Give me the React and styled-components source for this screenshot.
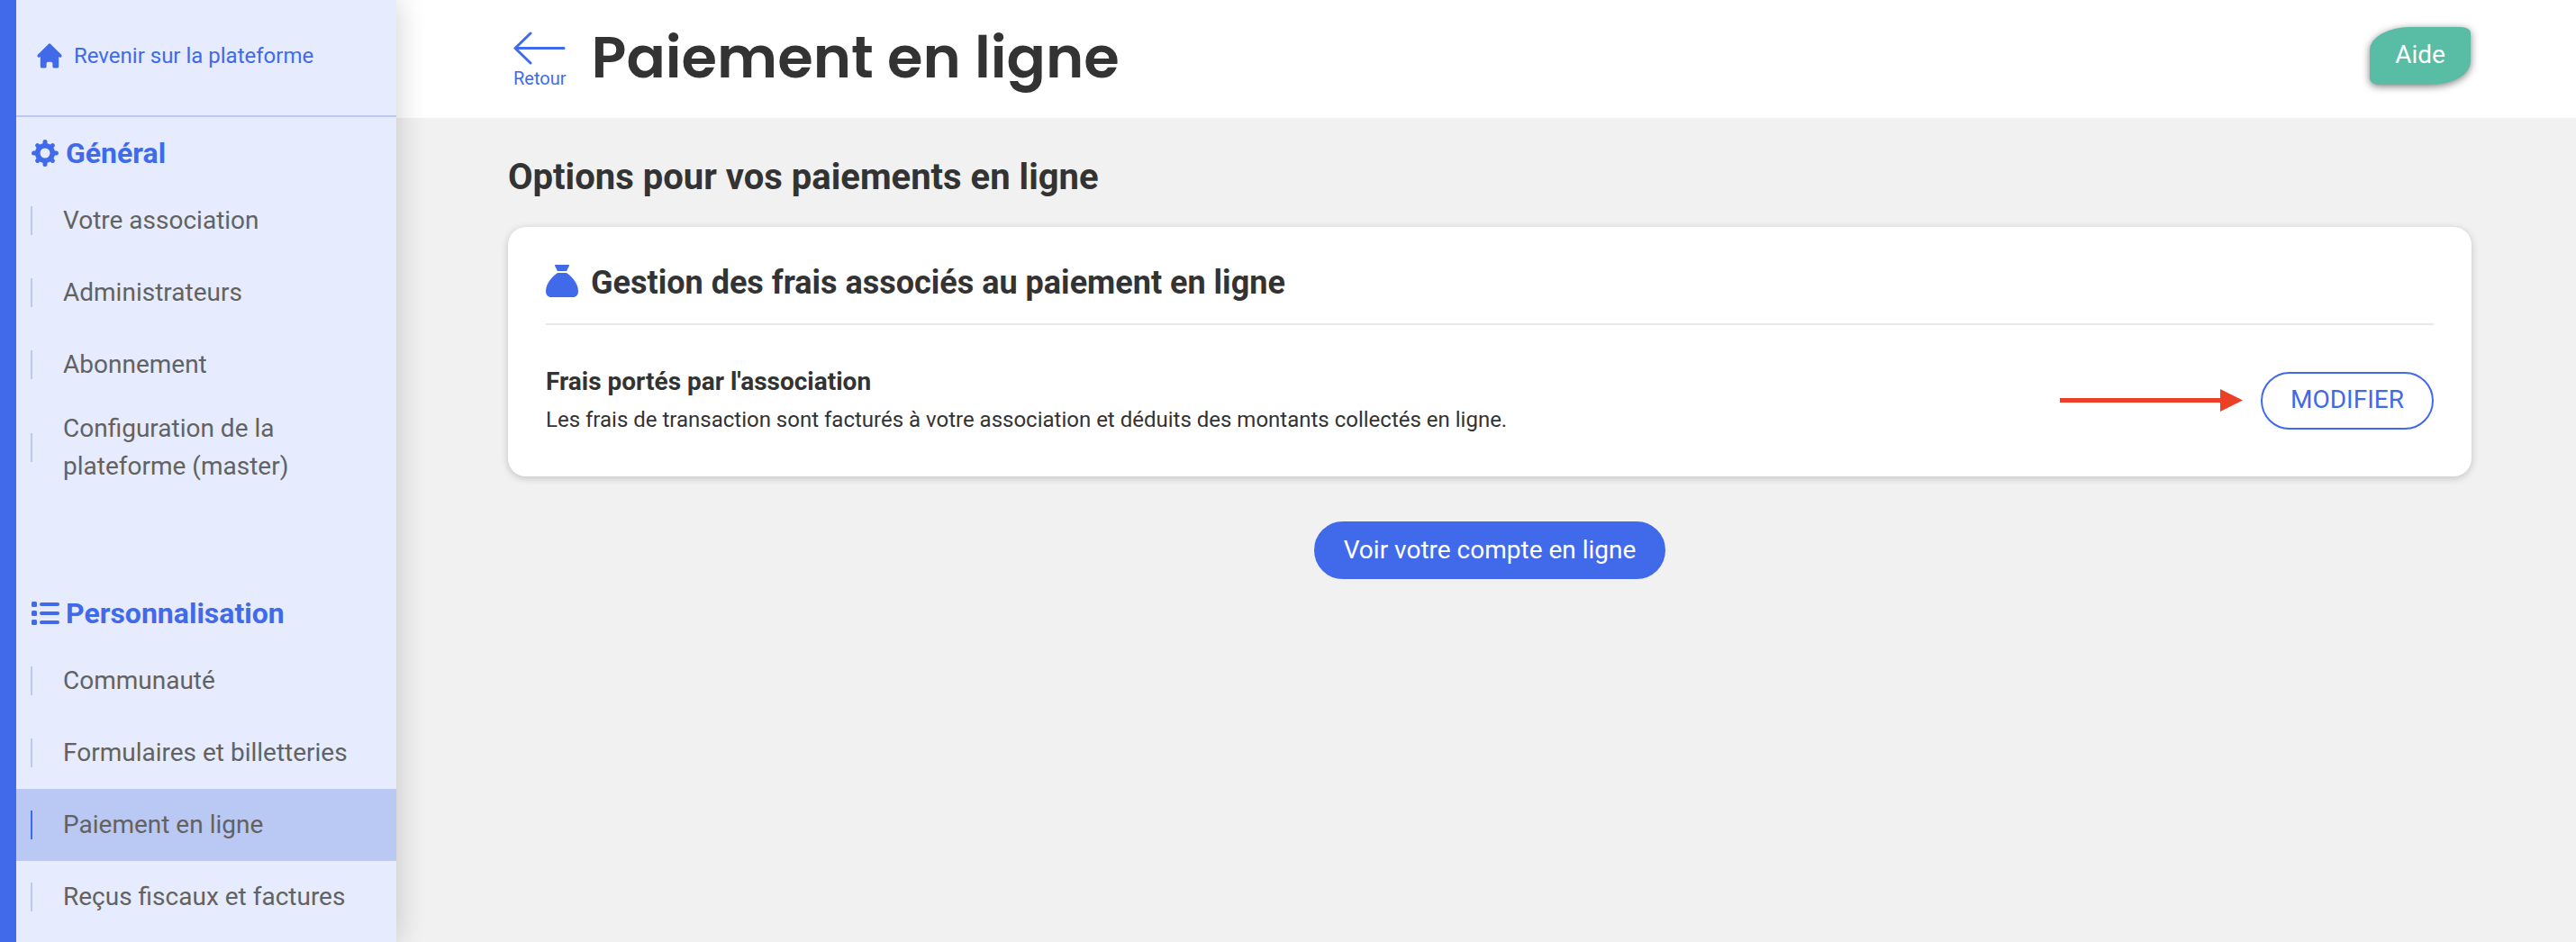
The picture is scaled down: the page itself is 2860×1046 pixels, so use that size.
import React from 'react';
import styled, { createGlobalStyle } from 'styled-components';
import { HiHome } from 'react-icons/hi';

const COLORS = {
  primary: '#416aea',
  primary_light: '#bac8f4',
  sidebar: '#e6ecfd',
  background: '#f1f1f1',
  text: '#333333',
  menu_text: '#626262',
  help: '#58bda4',
  arrow: '#eb4025',
};

const GlobalStyle = createGlobalStyle`
  *, *::before, *::after {
    box-sizing: border-box;
  }

  body {
    margin: 0;
    font-family: Roboto, "Liberation Sans", sans-serif;
    color: ${COLORS.text};
    background-color: ${COLORS.background};
  }

  a {
    text-decoration: none;
    color: inherit;
  }

  h1, h2, h3, h4, p, ul {
    margin: 0;
    padding: 0;
  }

  svg {
    display: block;
    flex-shrink: 0;
  }
`;

const AppWrapper = styled.div`
  display: flex;
  height: 100vh;
  overflow: hidden;
`;

const Sidebar = styled.nav`
  width: 440px;
  flex-shrink: 0;
  overflow: hidden;
  border-left: 18px solid ${COLORS.primary};
  background-color: ${COLORS.sidebar};
  box-shadow: 0 0 32px rgba(0, 0, 0, 0.2);
  z-index: 1;
`;

const BackToPlatform = styled.a`
  display: flex;
  align-items: center;
  gap: 10px;
  height: 130px;
  padding: 0 20px 4px;
  border-bottom: 2px solid ${COLORS.primary_light};
  color: ${COLORS.primary};
  font-size: 24px;
`;

const MenuSection = styled.section`
  margin-bottom: 92px;
`;

const MenuTitle = styled.h2`
  display: flex;
  align-items: center;
  gap: 7px;
  height: 75px;
  padding: 5px 16px 0;
  color: ${COLORS.primary};
  font-size: 32px;
  line-height: 40px;
`;

const Menu = styled.ul`
  list-style: none;
`;

const MenuLink = styled.a`
  display: flex;
  align-items: center;
  gap: 34px;
  min-height: 80px;
  padding: 10px 60px 10px 16px;
  color: ${COLORS.menu_text};
  background-color: ${props => (props.$active ? COLORS.primary_light : 'transparent')};
  font-size: 28px;
  line-height: 42px;
  white-space: ${props => (props.$wrap ? 'normal' : 'nowrap')};

  &::before {
    content: '';
    flex-shrink: 0;
    width: 2px;
    height: 32px;
    background-color: ${props => (props.$active ? COLORS.primary : COLORS.primary_light)};
  }
`;

const Page = styled.div`
  flex-grow: 1;
  min-width: 0;
`;

const Header = styled.header`
  display: flex;
  align-items: center;
  justify-content: space-between;
  height: 131px;
  padding: 0 117px 8px 130px;
  background-color: white;
`;

const HeaderTitle = styled.div`
  display: flex;
  align-items: center;
  gap: 28px;
`;

const BackLink = styled.a`
  display: flex;
  flex-direction: column;
  align-items: center;
  gap: 3px;
  padding-top: 10px;
  color: ${COLORS.primary};
  font-size: 20px;
  line-height: 24px;
`;

const PageTitle = styled.h1`
  padding-top: 4px;
  font-family: Poppins, Inter, sans-serif;
  font-size: 64px;
  font-weight: 600;
  line-height: 96px;
`;

const HelpButton = styled.button`
  width: 112px;
  height: 64px;
  padding: 0 0 2px;
  border: 0;
  border-radius: 40% 10%;
  background-color: ${COLORS.help};
  box-shadow: 0 2px 8px rgba(0, 0, 0, 0.5);
  color: white;
  font-family: inherit;
  font-size: 28px;
`;

const Content = styled.main`
  display: flex;
  flex-direction: column;
  align-items: stretch;
  padding: 41px 116px 0 124px;
`;

const ContentTitle = styled.h2`
  font-size: 40px;
  line-height: 50px;
`;

const Card = styled.section`
  margin: 30px 0 50px;
  padding: 36px 42px 43px;
  border-radius: 20px;
  background-color: white;
  box-shadow: 0 2px 8px rgba(0, 0, 0, 0.2);
`;

const CardTitle = styled.h3`
  display: flex;
  align-items: flex-start;
  gap: 14px;
  padding: 0 0 18px;
  border-bottom: 2px solid #e8e8e8;
  font-size: 36px;
  line-height: 53px;

  svg {
    margin-top: 6px;
  }
`;

const CardRow = styled.div`
  display: flex;
  align-items: center;
  justify-content: space-between;
  padding-top: 42px;
`;

const RowTitle = styled.h4`
  font-size: 28px;
  line-height: 42px;
`;

const RowText = styled.p`
  padding-top: 1px;
  font-size: 24px;
  line-height: 40px;
`;

const RowAction = styled.div`
  display: flex;
  align-items: center;
  gap: 20px;
`;

const RoundButton = styled.button`
  height: 64px;
  padding: 0 31px 2px;
  border: 2px solid ${COLORS.primary};
  border-radius: 32px;
  background-color: ${props => (props.$outlined ? 'white' : COLORS.primary)};
  color: ${props => (props.$outlined ? COLORS.primary : 'white')};
  font-family: inherit;
  font-size: 28px;
`;

const Centered = styled.div`
  display: flex;
  justify-content: center;
`;

const GearIcon = () => (
  <svg width="32" height="32" viewBox="0 0 32 32" fill="none" stroke={COLORS.primary} aria-hidden="true">
    <circle cx="16" cy="16" r="8.3" strokeWidth="5.6" />
    <path
      d="M16 3.600v3M16 25.400v3M3.600 16h3M25.400 16h3M7.600 7.600l2 2M22.400 22.400l2 2M24.400 7.600l-2 2M9.600 22.400l-2 2"
      strokeWidth="5"
      strokeLinecap="round"
    />
  </svg>
);

const ListIcon = () => (
  <svg width="32" height="28" viewBox="0 0 32 28" fill={COLORS.primary} aria-hidden="true">
    {[1, 11, 21].map(y => (
      <g key={y}>
        <rect x="1" y={y} width="6" height="6" rx="1.500" />
        <rect x="10" y={y + 1} width="22" height="4" rx="2" />
      </g>
    ))}
  </svg>
);

const BagIcon = () => (
  <svg width="36" height="36" viewBox="0 0 36 36" fill={COLORS.primary} aria-hidden="true">
    <path d="M10.500 0h15c.5 0 .8.600.5 1L23 7H13L10 1c-.3-.4 0-1 .5-1z" />
    <path d="M13 9h10c5 3.500 13 11 13 20.500 0 4-2.500 6.500-6 6.500H6c-3.500 0-6-2.500-6-6.500C0 20 8 12.500 13 9z" />
  </svg>
);

const BackIcon = () => (
  <svg
    width="58"
    height="38"
    viewBox="0 0 58 38"
    fill="none"
    stroke={COLORS.primary}
    strokeWidth="3"
    strokeLinecap="round"
    strokeLinejoin="round"
    aria-hidden="true"
  >
    <path d="M19 3L2 19.500 19 36M2 19.500h54" />
  </svg>
);

const ArrowIcon = () => (
  <svg width="203" height="26" viewBox="0 0 203 26" fill={COLORS.arrow} aria-hidden="true">
    <path d="M0 10h178V0l25 12.500L178 25V15H0z" />
  </svg>
);

const SECTIONS = [
  {
    title: 'Général',
    icon: GearIcon,
    items: [
      { label: 'Votre association' },
      { label: 'Administrateurs' },
      { label: 'Abonnement' },
      { label: 'Configuration de la plateforme (master)', wrap: true },
    ],
  },
  {
    title: 'Personnalisation',
    icon: ListIcon,
    items: [
      { label: 'Communauté' },
      { label: 'Formulaires et billetteries' },
      { label: 'Paiement en ligne', active: true },
      { label: 'Reçus fiscaux et factures' },
    ],
  },
];

const App = () => (
  <>
    <GlobalStyle />
    <AppWrapper>
      <Sidebar>
        <BackToPlatform href="#">
          <HiHome size={34} />
          Revenir sur la plateforme
        </BackToPlatform>
        {SECTIONS.map(({ title, icon: Icon, items }) => (
          <MenuSection key={title}>
            <MenuTitle>
              <Icon />
              {title}
            </MenuTitle>
            <Menu>
              {items.map(item => (
                <li key={item.label}>
                  <MenuLink
                    href="#"
                    $active={item.active}
                    $wrap={item.wrap}
                    aria-current={item.active ? 'page' : undefined}
                  >
                    {item.label}
                  </MenuLink>
                </li>
              ))}
            </Menu>
          </MenuSection>
        ))}
      </Sidebar>
      <Page>
        <Header>
          <HeaderTitle>
            <BackLink href="#">
              <BackIcon />
              Retour
            </BackLink>
            <PageTitle>Paiement en ligne</PageTitle>
          </HeaderTitle>
          <HelpButton type="button">Aide</HelpButton>
        </Header>
        <Content>
          <ContentTitle>Options pour vos paiements en ligne</ContentTitle>
          <Card>
            <CardTitle>
              <BagIcon />
              Gestion des frais associés au paiement en ligne
            </CardTitle>
            <CardRow>
              <div>
                <RowTitle>Frais portés par l'association</RowTitle>
                <RowText>
                  Les frais de transaction sont facturés à votre association et déduits des montants collectés en ligne.
                </RowText>
              </div>
              <RowAction>
                <ArrowIcon />
                <RoundButton type="button" $outlined>MODIFIER</RoundButton>
              </RowAction>
            </CardRow>
          </Card>
          <Centered>
            <RoundButton type="button">Voir votre compte en ligne</RoundButton>
          </Centered>
        </Content>
      </Page>
    </AppWrapper>
  </>
);

export default App;
